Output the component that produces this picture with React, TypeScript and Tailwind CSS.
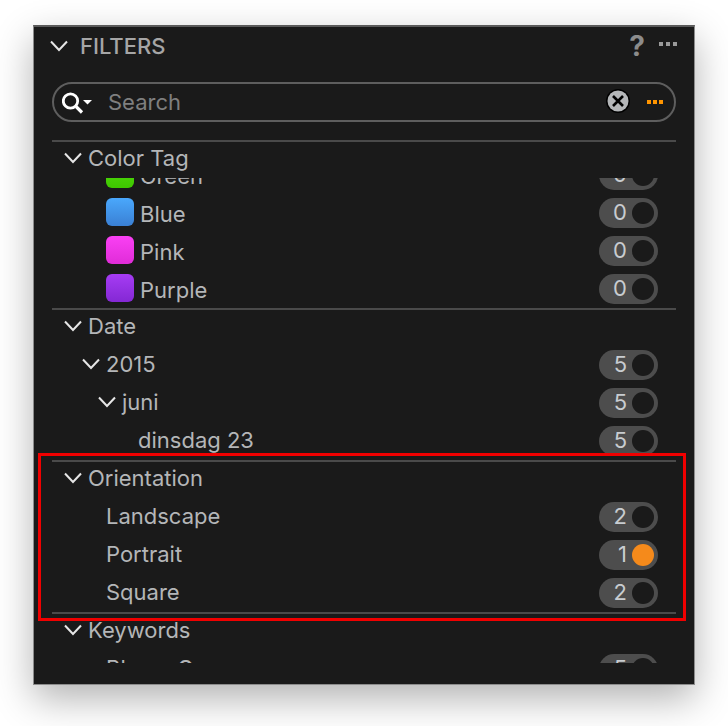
const font = { fontFamily: "Inter, 'Noto Sans', sans-serif" };

function Chevron({ className }: { className: string }) {
  return (
    <svg viewBox="0 0 18 12" className={className} fill="none" stroke="#e6e6e6" strokeWidth="2">
      <path d="M1 1.5 L9 10 L17 1.5" />
    </svg>
  );
}

function Count({ n, on }: { n: number; on?: boolean }) {
  return (
    <div className="flex h-[30px] w-[59px] shrink-0 items-center justify-end rounded-full bg-[#4d4d4d] pr-1">
      <span className="mb-[2px] mr-[5px] text-[22px] leading-none text-[#c8ccd0]">{n}</span>
      <span className={on ? "h-[22px] w-[22px] rounded-full bg-[#f58a1b]" : "h-[22px] w-[22px] rounded-full bg-[#1a1a1a]"} />
    </div>
  );
}

function Row({ label, n, indent, swatch, on }: { label: string; n: number; indent: string; swatch?: string; on?: boolean }) {
  return (
    <div className="flex h-[38px] items-center pr-[18px]">
      <div className={`flex flex-1 items-center ${indent}`}>
        {swatch && <span className={`mb-[2px] mr-[6px] h-[28px] w-[28px] rounded-[6px] ${swatch}`} />}
        <span className={swatch ? "pt-[2px]" : "pb-[2px]"}>{label}</span>
      </div>
      <Count n={n} on={on} />
    </div>
  );
}

function TreeRow({ label, n, chevron }: { label: string; n: number; chevron: string }) {
  return (
    <div className="flex h-[38px] items-center pr-[18px]">
      <div className="flex flex-1 items-center pb-[2px]">
        <Chevron className={`h-[12px] w-[18px] ${chevron}`} />
        <span className="ml-[6px]">{label}</span>
      </div>
      <Count n={n} />
    </div>
  );
}

function SectionHead({ label, className }: { label: string; className: string }) {
  return (
    <div className={`flex items-center pl-3 ${className}`}>
      <Chevron className="h-[12px] w-[18px]" />
      <span className="ml-[6px]">{label}</span>
    </div>
  );
}

export default function App() {
  return (
    <div className="relative h-[726px] w-[728px] overflow-hidden bg-white pl-[33px] pt-[25px]" style={font}>
      <div className="h-[660px] w-[662px] border border-t-2 border-[#8c8c8c] border-t-[#5a5a5a] bg-[#1a1a1a] text-[22px] text-[#b4b6b8] shadow-[0_14px_36px_rgba(0,0,0,0.3)]">
        {/* Header */}
        <div className="flex h-[37px] items-center pl-[16px] pr-[17px]">
          <Chevron className="h-[12px] w-[18px]" />
          <span className="ml-[12px] flex-1 pt-[2px] text-[22px] font-medium text-[#a6a6a6]">FILTERS</span>
          <span className="mr-[14px] text-[28px] font-bold leading-none text-[#8c8c8c]">?</span>
          <div className="mb-[3px] flex gap-[3px]">
            <span className="h-[4px] w-[4px] bg-[#9a9a9a]" />
            <span className="h-[4px] w-[4px] bg-[#9a9a9a]" />
            <span className="h-[4px] w-[4px] bg-[#9a9a9a]" />
          </div>
        </div>

        <div className="mx-[18px]">
          {/* Search */}
          <div className="mt-[18px] flex h-[40px] items-center rounded-full border-2 border-[#5e5e5e] pl-[8px] pr-[11px]">
            <svg viewBox="0 0 32 24" className="h-[24px] w-[32px]">
              <circle cx="8.5" cy="11" r="7.2" fill="none" stroke="#fff" strokeWidth="2.8" />
              <path d="M14 16.5 L20 22.5" stroke="#fff" strokeWidth="3.2" />
              <path d="M21 10 H30 L25.5 14.5 Z" fill="#fff" />
            </svg>
            <span className="ml-[14px] flex-1 text-[#7f7f7f]">Search</span>
            <svg viewBox="0 0 24 24" className="mb-[2px] h-[24px] w-[24px]">
              <circle cx="12" cy="12" r="12" fill="#000" />
              <circle cx="12" cy="12" r="10.5" fill="#b4b6b8" />
              <path d="M7 7 L17 17 M17 7 L7 17" stroke="#000" strokeWidth="2.6" />
            </svg>
            <div className="ml-[17px] flex gap-[2px]">
              <span className="h-[4px] w-[4px] bg-[#ff9500]" />
              <span className="h-[4px] w-[4px] bg-[#ff9500]" />
              <span className="h-[4px] w-[4px] bg-[#ff9500]" />
            </div>
          </div>

          {/* Color Tag */}
          <div className="mt-[18px] border-t-2 border-[#4a4a4a]">
            <SectionHead label="Color Tag" className="h-[36px] pb-[4px]" />
            <div className="h-[130px] overflow-hidden">
              <div className="-mt-[22px]">
                <Row label="Green" n={0} indent="pl-[54px]" swatch="bg-gradient-to-b from-[#55e010] to-[#3ec800]" />
                <Row label="Blue" n={0} indent="pl-[54px]" swatch="bg-gradient-to-b from-[#4aa8fc] to-[#3a80d4]" />
                <Row label="Pink" n={0} indent="pl-[54px]" swatch="bg-gradient-to-b from-[#fa40f4] to-[#e02cd8]" />
                <Row label="Purple" n={0} indent="pl-[54px]" swatch="bg-gradient-to-b from-[#a63cf4] to-[#8428d4]" />
              </div>
            </div>
          </div>

          {/* Date */}
          <div className="border-t-2 border-[#4a4a4a]">
            <SectionHead label="Date" className="h-[36px] pb-[4px]" />
            <TreeRow label="2015" n={5} chevron="ml-[30px]" />
            <TreeRow label="juni" n={5} chevron="ml-[46px]" />
            <Row label="dinsdag 23" n={5} indent="pl-[86px]" />
          </div>

          {/* Orientation */}
          <div className="border-t-2 border-[#4a4a4a]">
            <SectionHead label="Orientation" className="h-[36px] pb-[4px]" />
            <Row label="Landscape" n={2} indent="pl-[54px]" />
            <Row label="Portrait" n={1} indent="pl-[54px]" on />
            <Row label="Square" n={2} indent="pl-[54px]" />
          </div>

          {/* Keywords */}
          <div className="border-t-2 border-[#4a4a4a]">
            <SectionHead label="Keywords" className="h-[36px] pb-[4px]" />
            <div className="h-[13px] overflow-hidden">
              <Row label="Bloem Q" n={5} indent="pl-[54px]" />
            </div>
          </div>
        </div>
      </div>

      {/* Red highlight over the Orientation group */}
      <div className="absolute left-[38px] top-[453px] h-[168px] w-[648px] border-[3px] border-[#f00000]" />
    </div>
  );
}
